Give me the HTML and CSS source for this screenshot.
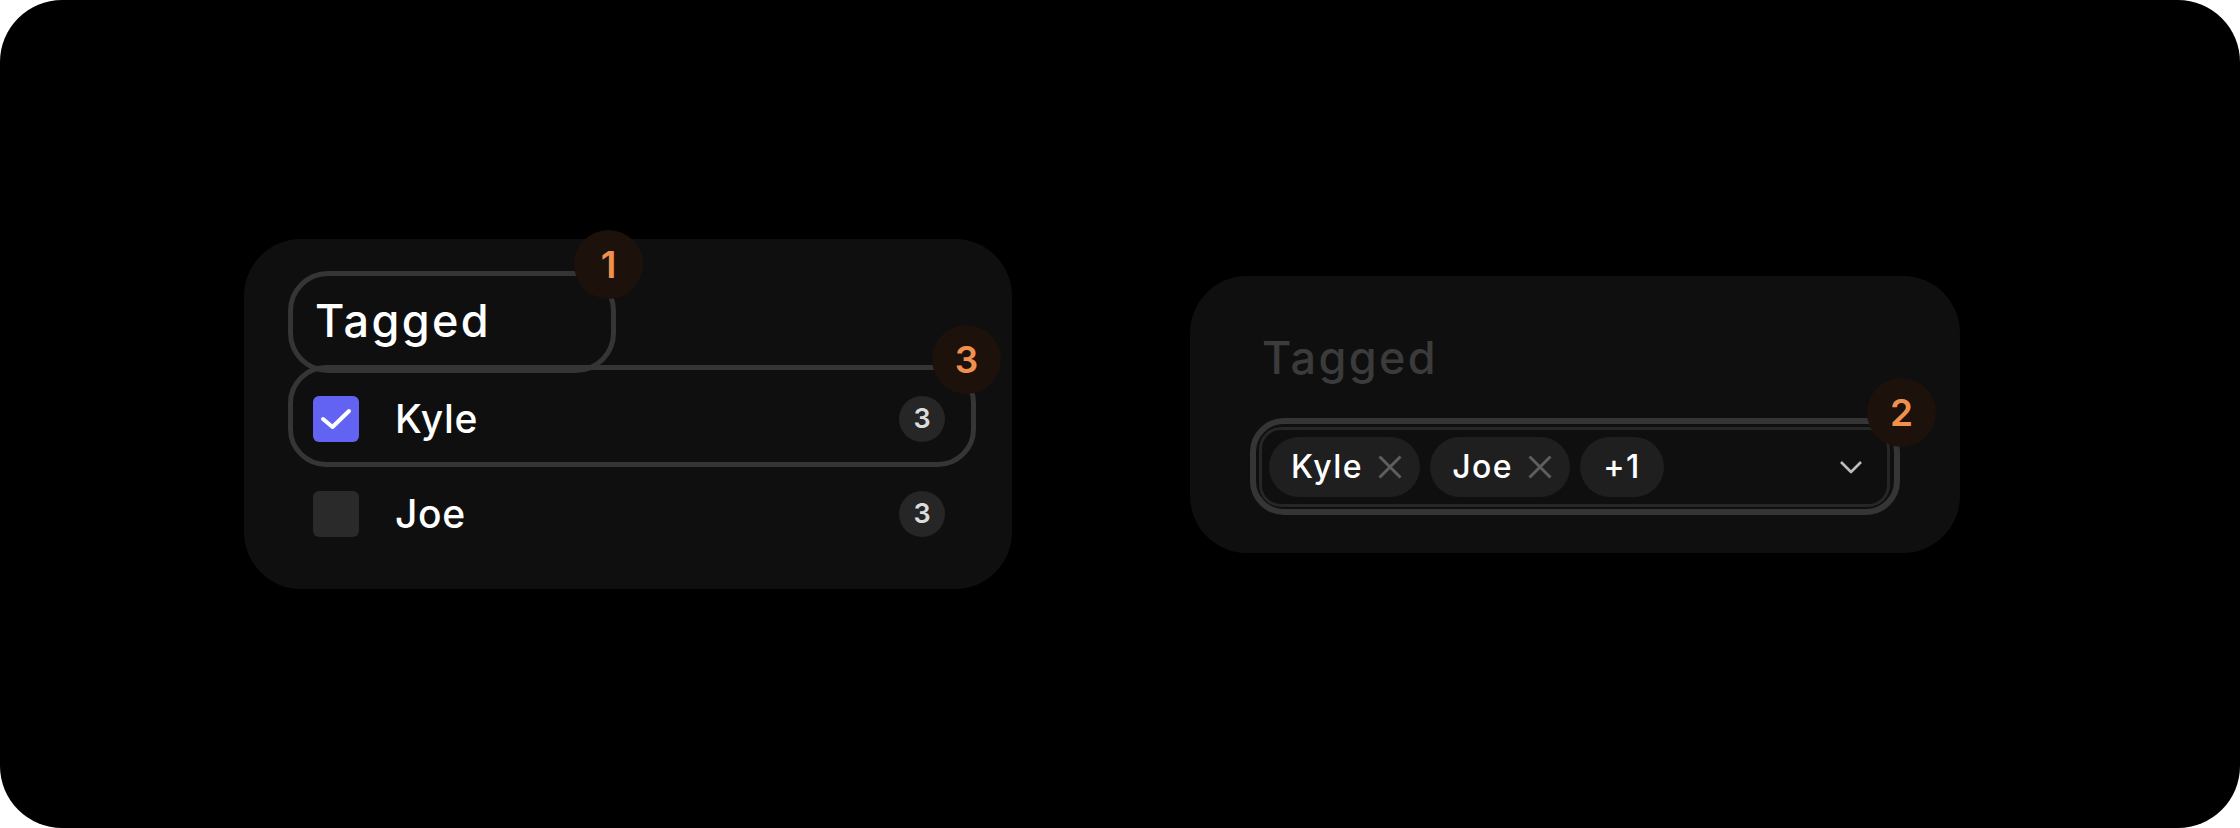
FILE: index.html
```html
<!DOCTYPE html>
<html lang="en">
<head>
  <meta charset="UTF-8" />
  <title>Tagged filter</title>
  <link rel="stylesheet" href="styles.css">
</head>
<body>
  <div class="frame">

    <!-- checkbox list variant -->
    <div class="card card-list">
      <div class="row row-label">
        <span class="ring ring-label"><span class="badge badge-label">1</span></span>
        <span class="label">Tagged</span>
      </div>

      <div class="row row-item">
        <span class="ring ring-item"><span class="badge badge-item">3</span></span>
        <span class="check checked">
          <svg width="46" height="46" viewBox="0 0 46 46"><path d="M10 23 L19.5 31 L36 15" fill="none" stroke="#fff" stroke-width="4" stroke-linecap="round" stroke-linejoin="round"/></svg>
        </span>
        <span class="name">Kyle</span>
        <span class="count">3</span>
      </div>

      <div class="row row-item">
        <span class="check"></span>
        <span class="name">Joe</span>
        <span class="count">3</span>
      </div>
    </div>

    <!-- select variant -->
    <div class="card card-select">
      <div class="label label-muted">Tagged</div>
      <div class="select">
        <span class="ring ring-select"><span class="badge badge-select">2</span></span>
        <span class="chip">Kyle
          <svg width="24" height="24" viewBox="0 0 24 24"><path d="M1.5 1.5 L22.5 22.5 M22.5 1.5 L1.5 22.5" stroke="#5e5e5e" stroke-width="3"/></svg>
        </span>
        <span class="chip">Joe
          <svg width="24" height="24" viewBox="0 0 24 24"><path d="M1.5 1.5 L22.5 22.5 M22.5 1.5 L1.5 22.5" stroke="#5e5e5e" stroke-width="3"/></svg>
        </span>
        <span class="chip chip-more">+1</span>
        <svg class="chevron" width="24" height="14" viewBox="0 0 24 14"><path d="M2 2 L12 12 L22 2" fill="none" stroke="#bdbdbd" stroke-width="2.6" stroke-linejoin="round"/></svg>
      </div>
    </div>

  </div>
</body>
</html>
```

FILE: styles.css
```css
body {
  margin: 0;
  background: #fff;
  font-family: Inter, 'Noto Sans', sans-serif;
  color: #fff;
}

.frame {
  width: 2240px;
  height: 828px;
  background: #000;
  border-radius: 62px;
  display: flex;
  align-items: center;
  gap: 178px;
  padding-left: 244px;
  box-sizing: border-box;
}

.card {
  background: #0f0f0f;
  border-radius: 57px;
  box-sizing: border-box;
}

.card-list {
  width: 768px;
  height: 350px;
  padding: 32px 36px 28px 44px;
}

.card-select {
  width: 770px;
  height: 277px;
  padding: 54px 70px 46px 69px;
}

.row {
  position: relative;
  display: flex;
  align-items: center;
}

.row-label {
  height: 100px;
}

.row-item {
  height: 95px;
  padding: 0 31px 0 25px;
}

.label {
  font-size: 45px;
  font-weight: 500;
  letter-spacing: 2.4px;
  line-height: 100px;
  padding-left: 27px;
}

.label-muted {
  color: #3b3b3b;
  line-height: 56px;
  padding-left: 3px;
  margin-bottom: 41px;
}

/* annotation rings + numbered markers */
.ring {
  position: absolute;
  border: 5px solid #353535;
  box-sizing: border-box;
  pointer-events: none;
}

.ring-label {
  top: 0;
  left: 0;
  width: 328px;
  height: 102px;
  border-radius: 40px;
}

.ring-item {
  top: -6px;
  left: 0;
  right: 0;
  height: 102px;
  border-radius: 38px;
}

.ring-select {
  top: -12px;
  left: -12px;
  right: -13px;
  bottom: -11px;
  border-width: 6px;
  border-radius: 34px;
}

.badge {
  position: absolute;
  width: 69px;
  height: 69px;
  border-radius: 50%;
  background: #1c110b;
  color: #f0904f;
  font-size: 37px;
  font-weight: 600;
  letter-spacing: 0;
  display: flex;
  align-items: center;
  justify-content: center;
}

.badge-label { top: -46px; right: -32px; }
.badge-item { top: -45px; right: -30px; }
.badge-select { top: -46px; right: -42px; }

.check {
  width: 46px;
  height: 46px;
  border-radius: 6px;
  background: #2a2a2a;
  flex-shrink: 0;
}

.check.checked {
  background: #6262f3;
}

.check svg {
  display: block;
}

.name {
  font-size: 39px;
  font-weight: 500;
  letter-spacing: 0.6px;
  margin-left: 36px;
}

.count {
  margin-left: auto;
  width: 46px;
  height: 46px;
  border-radius: 50%;
  background: #262626;
  color: #dcdcdc;
  font-size: 27px;
  font-weight: 600;
  display: flex;
  align-items: center;
  justify-content: center;
}

.select {
  position: relative;
  height: 80px;
  border: 3px solid #262626;
  border-radius: 22px;
  box-sizing: border-box;
  display: flex;
  align-items: center;
  gap: 10px;
  padding: 0 24px 0 7px;
}

.chip {
  height: 60px;
  border-radius: 30px;
  background: #1f1f1f;
  font-size: 32px;
  font-weight: 500;
  letter-spacing: 1.5px;
  display: flex;
  align-items: center;
  gap: 15px;
  padding: 0 18px 0 22px;
}

.chip-more {
  padding: 0 23px;
}

.chevron {
  margin-left: auto;
}
```
